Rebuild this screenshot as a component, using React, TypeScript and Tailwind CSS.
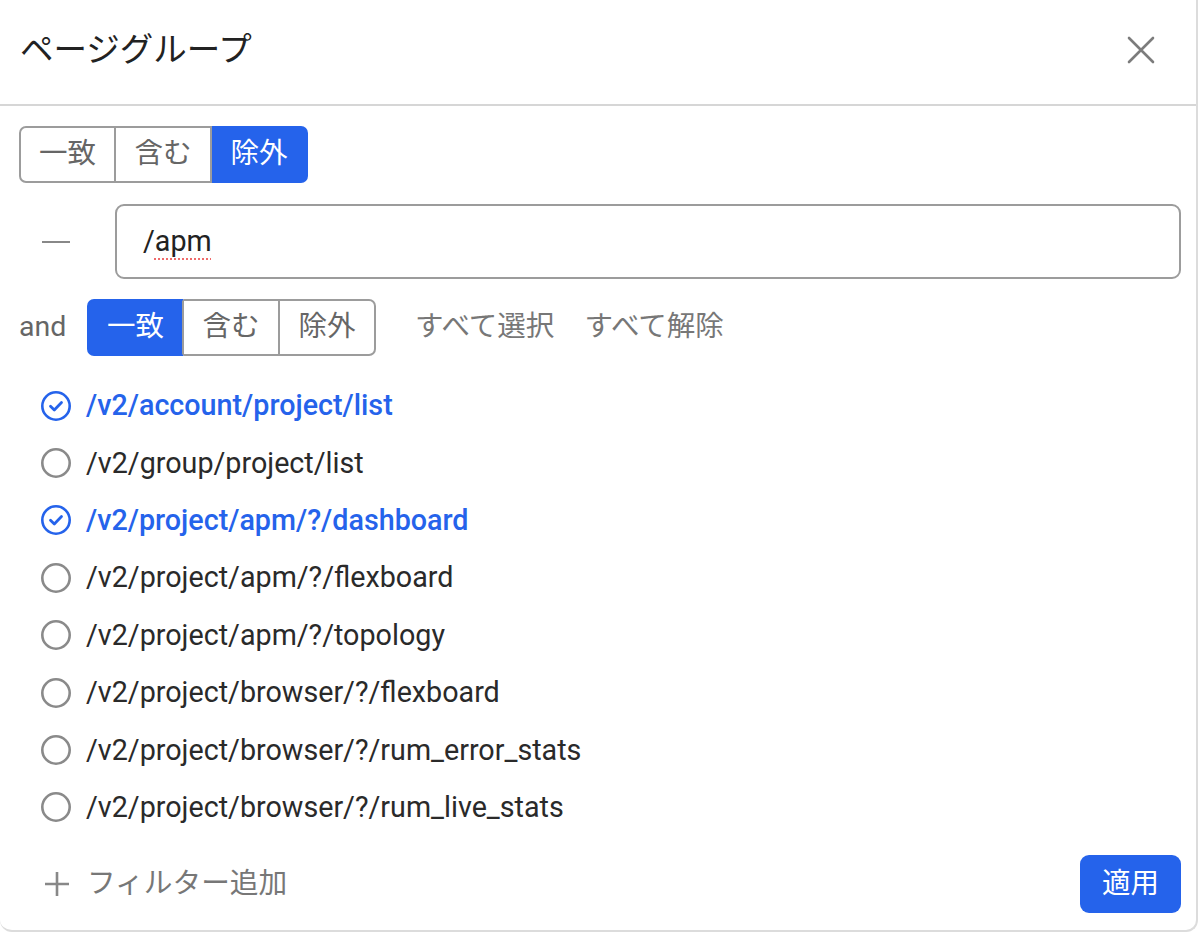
import { useState } from "react";

type Mode = "一致" | "含む" | "除外";
const MODES: Mode[] = ["一致", "含む", "除外"];
const WIDTHS = ["w-[97px]", "w-[96px]", "w-[96px]"];

const PAGES = [
  "/v2/account/project/list",
  "/v2/group/project/list",
  "/v2/project/apm/?/dashboard",
  "/v2/project/apm/?/flexboard",
  "/v2/project/apm/?/topology",
  "/v2/project/browser/?/flexboard",
  "/v2/project/browser/?/rum_error_stats",
  "/v2/project/browser/?/rum_live_stats",
];

function Segmented({ value, onChange }: { value: Mode; onChange: (m: Mode) => void }) {
  return (
    <div className="flex h-[57px]">
      {MODES.map((m, i) => {
        const active = m === value;
        const last = i === MODES.length - 1;
        return (
          <button
            key={m}
            type="button"
            onClick={() => onChange(m)}
            className={`flex items-center justify-center border-y-2 border-r-2 text-[28.5px] ${WIDTHS[i]} ${
              i === 0 ? "rounded-l-[7px] border-l-2" : ""
            } ${last ? "rounded-r-[7px]" : ""} ${
              active
                ? `border-y-[#2563eb] border-l-[#2563eb] bg-[#2563eb] text-white ${last ? "border-r-[#2563eb]" : "border-r-[#9c9c9c]"}`
                : "border-[#9c9c9c] bg-white text-[#666]"
            }`}
          >
            {m}
          </button>
        );
      })}
    </div>
  );
}

function CheckCircle() {
  return (
    <svg width="32" height="32" viewBox="0 0 32 32" fill="none">
      <circle cx="16" cy="16" r="13.7" stroke="#2563eb" strokeWidth="2.6" />
      <path d="M10.5 16.2l3.8 3.8 7.2-7.4" stroke="#2563eb" strokeWidth="2.8" strokeLinecap="round" strokeLinejoin="round" />
    </svg>
  );
}

function EmptyCircle() {
  return (
    <svg width="32" height="32" viewBox="0 0 32 32" fill="none">
      <circle cx="16" cy="16" r="13.7" stroke="#8a8a8a" strokeWidth="2.6" />
    </svg>
  );
}

export default function App() {
  const [outer, setOuter] = useState<Mode>("除外");
  const [inner, setInner] = useState<Mode>("一致");
  const [selected, setSelected] = useState<string[]>([PAGES[0], PAGES[2]]);

  const toggle = (p: string) =>
    setSelected((s) => (s.includes(p) ? s.filter((x) => x !== p) : [...s, p]));

  return (
    <div className="h-[934px] w-[1200px] bg-white font-['Roboto','Noto_Sans_CJK_JP',sans-serif]">
      <div className="flex h-[932px] w-[1198px] flex-col rounded-b-[12px] border-r-2 border-b-2 border-[#dcdcdc] bg-white">
        <div className="flex h-[106px] items-center justify-between border-b-2 border-[#d6d6d6] pb-[4px] pl-[20px] pr-[41px]">
          <h1 className="text-[33.5px] text-[#222]">ページグループ</h1>
          <button type="button" aria-label="close">
            <svg width="28" height="28" viewBox="0 0 28 28" fill="none">
              <path d="M2 2l24 24M26 2L2 26" stroke="#7c7c7c" strokeWidth="2.6" strokeLinecap="round" />
            </svg>
          </button>
        </div>

        <div className="flex flex-1 flex-col pt-[20px] pl-[19px] pr-[15px]">
          <Segmented value={outer} onChange={setOuter} />

          <div className="mt-[21px] flex items-center">
            <button type="button" className="flex w-[96px] items-center pl-[23px]">
              <span className="block h-[2px] w-[28px] bg-[#888]" />
            </button>
            <div className="flex h-[75px] flex-1 items-center rounded-[9px] border-2 border-[#9c9c9c] px-[26px] text-[28.7px] text-[#222]">
              /
              <span className="underline decoration-[#ef6b6b] decoration-dotted decoration-[2px] underline-offset-[8px]">
                apm
              </span>
            </div>
          </div>

          <div className="mt-[20px] flex h-[57px] items-center">
            <span className="w-[68px] text-[28.5px] text-[#666]">and</span>
            <Segmented value={inner} onChange={setInner} />
            <button type="button" className="ml-[39px] text-[28.5px] text-[#777]" onClick={() => setSelected(PAGES)}>
              すべて選択
            </button>
            <button type="button" className="ml-[30px] text-[28.5px] text-[#777]" onClick={() => setSelected([])}>
              すべて解除
            </button>
          </div>

          <ul className="mt-[21px] flex flex-col">
            {PAGES.map((p) => {
              const on = selected.includes(p);
              return (
                <li
                  key={p}
                  onClick={() => toggle(p)}
                  className="flex h-[57.4px] cursor-pointer items-center gap-[14px] pl-[21px]"
                >
                  {on ? <CheckCircle /> : <EmptyCircle />}
                  <span className={`text-[28.7px] ${on ? "font-medium text-[#2563eb]" : "text-[#2a2a2a]"}`}>{p}</span>
                </li>
              );
            })}
          </ul>

          <div className="mt-auto mb-[17px] flex items-center justify-between">
            <button type="button" className="flex items-center gap-[16px] pl-[24px] text-[28.7px] text-[#777]">
              <svg width="28" height="28" viewBox="0 0 28 28" fill="none">
                <path d="M14 2v24M2 14h24" stroke="#888" strokeWidth="2.6" />
              </svg>
              フィルター追加
            </button>
            <button
              type="button"
              className="flex h-[58px] w-[101px] items-center justify-center rounded-[9px] bg-[#2563eb] text-[28.5px] text-white"
            >
              適用
            </button>
          </div>
        </div>
      </div>
    </div>
  );
}
